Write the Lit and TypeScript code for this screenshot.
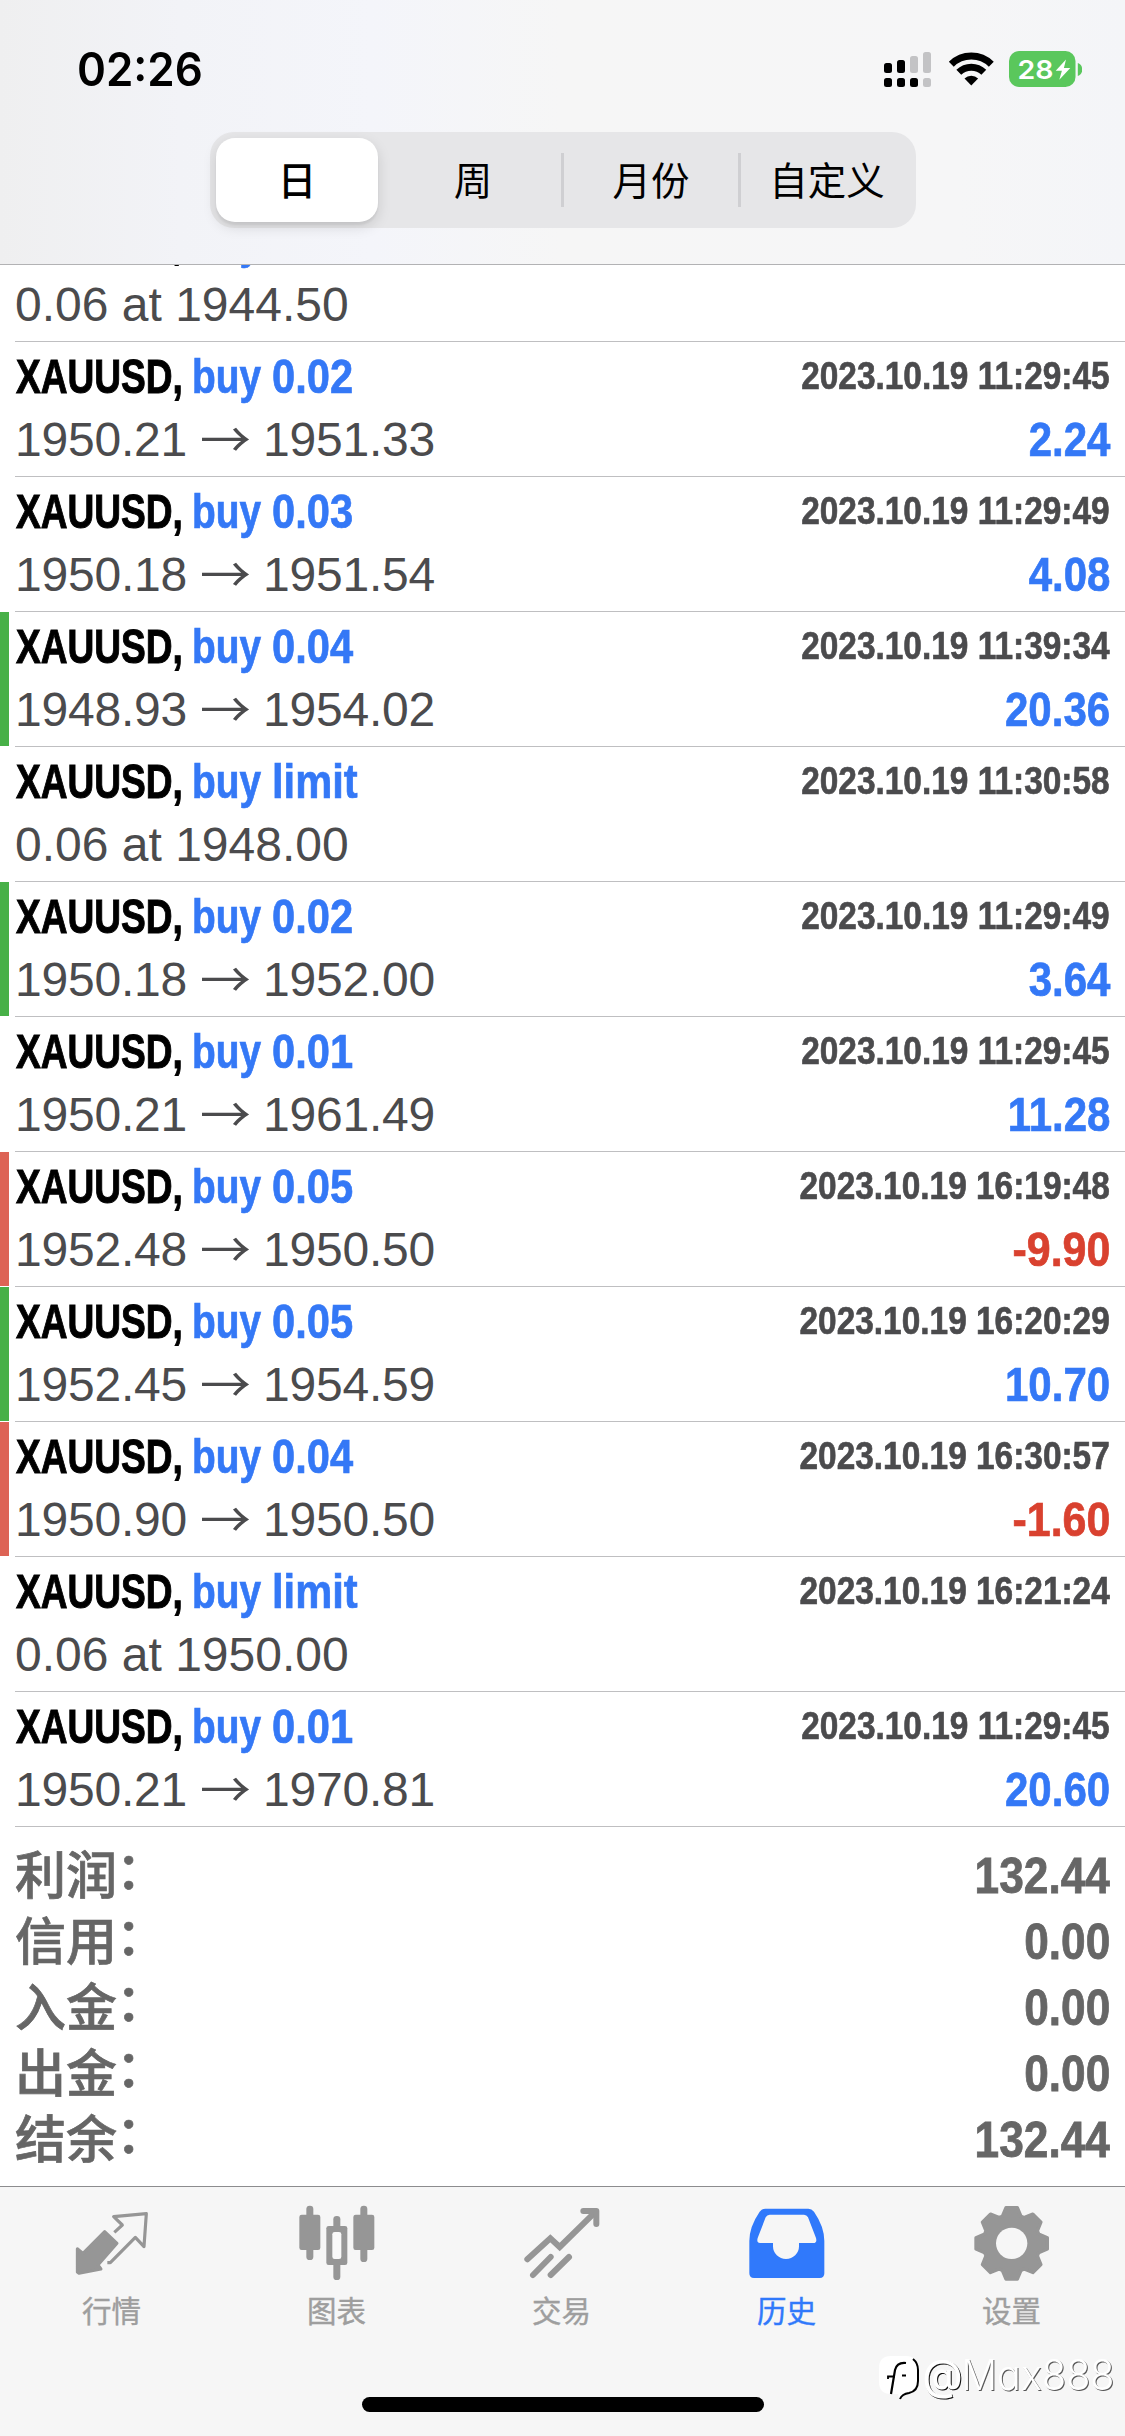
import { LitElement, html, svg, css, nothing } from "lit";
import { customElement, property } from "lit/decorators.js";
import { classMap } from "lit/directives/class-map.js";

interface Deal {
  side: string;
  size: string;
  time: string;
  from: string;
  to?: string;
  value?: string;
  mark?: "tp" | "sl";
}

const DEALS: Deal[] = [
  { side: "buy", size: "limit", time: "", from: "0.06 at 1944.50" },
  { side: "buy", size: "0.02", time: "2023.10.19 11:29:45", from: "1950.21", to: "1951.33", value: "2.24" },
  { side: "buy", size: "0.03", time: "2023.10.19 11:29:49", from: "1950.18", to: "1951.54", value: "4.08" },
  { side: "buy", size: "0.04", time: "2023.10.19 11:39:34", from: "1948.93", to: "1954.02", value: "20.36", mark: "tp" },
  { side: "buy", size: "limit", time: "2023.10.19 11:30:58", from: "0.06 at 1948.00" },
  { side: "buy", size: "0.02", time: "2023.10.19 11:29:49", from: "1950.18", to: "1952.00", value: "3.64", mark: "tp" },
  { side: "buy", size: "0.01", time: "2023.10.19 11:29:45", from: "1950.21", to: "1961.49", value: "11.28" },
  { side: "buy", size: "0.05", time: "2023.10.19 16:19:48", from: "1952.48", to: "1950.50", value: "-9.90", mark: "sl" },
  { side: "buy", size: "0.05", time: "2023.10.19 16:20:29", from: "1952.45", to: "1954.59", value: "10.70", mark: "tp" },
  { side: "buy", size: "0.04", time: "2023.10.19 16:30:57", from: "1950.90", to: "1950.50", value: "-1.60", mark: "sl" },
  { side: "buy", size: "limit", time: "2023.10.19 16:21:24", from: "0.06 at 1950.00" },
  { side: "buy", size: "0.01", time: "2023.10.19 11:29:45", from: "1950.21", to: "1970.81", value: "20.60" },
];

const TOTALS: [string, string][] = [
  ["利润", "132.44"],
  ["信用", "0.00"],
  ["入金", "0.00"],
  ["出金", "0.00"],
  ["结余", "132.44"],
];

@customElement("status-bar")
class StatusBar extends LitElement {
  static styles = css`
    :host { display: flex; justify-content: space-between; height: 132px; padding: 0 43px 0 77px; box-sizing: border-box; }
    .time { font: 600 46px/60px Inter, sans-serif; padding-top: 39px; transform: scaleX(.955); transform-origin: 0 50%; }
    .icons { display: flex; align-items: flex-start; padding-top: 47px; }
    text { font: 600 26px Inter, sans-serif; }
  `;
  render() {
    const bars = [[63, 10], [60, 13], [56, 17], [52, 21]];
    return html`
      <div class="time">02:26</div>
      <div class="icons">
        <svg width="202" height="44" viewBox="880 47 202 44">
          ${bars.map(([y, h], i) => svg`
            <rect x=${884 + i * 13} y=${y} width="8" height=${h} rx="2.5" fill=${i < 2 ? "#000" : "#c3c3c5"}></rect>
            <rect x=${884 + i * 13} y="78" width="8" height="9" rx="2.5" fill=${i < 3 ? "#000" : "#c3c3c5"}></rect>`)}
          <g fill="none" stroke="#000" stroke-width="7">
            <path d="M951.3 64.2a28.5 28.5 0 0 1 40 0"></path>
            <path d="M958.8 72.300a18 18 0 0 1 25 0"></path>
          </g>
          <path d="M971.3 85.5l-6.8-7a9.8 9.8 0 0 1 13.6 0z"></path>
          <rect x="1009" y="51" width="66.500" height="36" rx="10" fill="#5ac75c"></rect>
          <path d="M1077.800 63q4.400 1.500 4.400 6.500t-4.400 6.500z" fill="#5ac75c"></path>
          <text x="1017.500" y="79" fill="#fff" textLength="36" lengthAdjust="spacingAndGlyphs">28</text>
          <path d="M1066 59.500l-10.300 11.300h6.200l-2.600 9 11-11.800h-6.400z" fill="#fff"></path>
        </svg>
      </div>`;
  }
}

@customElement("period-switch")
class PeriodSwitch extends LitElement {
  static styles = css`
    :host { display: grid; grid-template-columns: 168px 186px 177px 175px; width: 706px; height: 96px; margin: 0 0 0 210px; border-radius: 24px; background: #e6e6e8; box-sizing: border-box; }
    .item { display: flex; align-items: center; justify-content: center; font: 400 38.500px/60px "Noto Sans CJK SC", sans-serif; color: #000; padding: 0 3px 5px 0; background: linear-gradient(#cfcfd2, #cfcfd2) no-repeat right center / 0 54px; }
    .item.rule { background-size: 3px 54px; }
    .item.rule:nth-child(2) { padding: 0 0 5px 4px; }
    .item.on { margin: 6px 0 6px 6px; padding-right: 0; border-radius: 19px; background: #fff; font-weight: 500; box-shadow: 0 5px 14px rgba(0, 0, 0, .13), 0 3px 2px rgba(0, 0, 0, .05); }
  `;
  render() {
    return ["日", "周", "月份", "自定义"].map((t, i) =>
      html`<div class=${classMap({ item: true, on: i === 0, rule: i === 1 || i === 2 })}>${t}</div>`);
  }
}

@customElement("deal-row")
class DealRow extends LitElement {
  @property({ attribute: false }) deal!: Deal;
  static styles = css`
    :host { display: flex; height: 135px; font: 400 48px/60px "Liberation Sans", Arial, sans-serif; color: #4b4b4d; white-space: nowrap; }
    .mark { width: 9px; height: 134px; }
    .mark.tp { background: #47b047; }
    .mark.sl { background: #dd6355; }
    .body { flex: 1; margin-left: 6px; padding: 5px 15px 0 0; border-bottom: 1px solid #bfbfc1; box-sizing: border-box; }
    .line { display: flex; height: 60px; }
    .line + .line { margin-top: 3px; }
    .line > span { display: block; flex: none; transform-origin: 0 50%; }
    b { display: block; flex: none; transform-origin: 0 50%; -webkit-text-stroke: .7px currentColor; }
    .symbol { width: 176px; margin-left: .5px; color: #000; transform: scaleX(.772); -webkit-text-stroke: 1px #000; }
    .side { width: 80px; color: #3478f6; transform: scaleX(.81); }
    .size { color: #3478f6; transform: scaleX(.868); }
    .line > .right { margin-left: auto; transform-origin: 100% 50%; }
    .time { font-size: 39.500px; line-height: 57px; transform: scaleX(.846); }
    .value { color: #3478f6; transform: scaleX(.875); }
    .value.neg { color: #d9412f; transform: scaleX(.895); }
    .price { width: 172px; letter-spacing: -.2px; }
    .line > .arrow { width: 63px; margin-left: 13px; font: 400 48px/52px "Noto Sans CJK SC", sans-serif; transform: scaleX(1.06); }
  `;
  render() {
    const d = this.deal;
    return html`
      <div class=${classMap({ mark: true, tp: d.mark === "tp", sl: d.mark === "sl" })}></div>
      <div class="body">
        <div class="line">
          <b class="symbol">XAUUSD,</b><b class="side">${d.side}</b><b class="size">${d.size}</b>
          <b class="right time">${d.time}</b>
        </div>
        <div class="line">
          ${d.to
            ? html`<span class="price">${d.from}</span><span class="arrow">→</span><span class="price">${d.to}</span>`
            : html`<span>${d.from}</span>`}
          ${d.value ? html`<b class=${classMap({ right: true, value: true, neg: d.value.startsWith("-") })}>${d.value}</b>` : nothing}
        </div>
      </div>`;
  }
}

@customElement("totals-list")
class TotalsList extends LitElement {
  static styles = css`
    :host { display: block; padding: 12px 15px 0 15px; color: #666; }
    .row { display: flex; justify-content: space-between; height: 66px; }
    .label { display: flex; font: 500 51px/66px "Noto Sans CJK SC", sans-serif; -webkit-text-stroke: .7px currentColor; }
    .colon { margin-left: -1px; line-height: 56px; }
    .sum { padding-top: 4px; font: 700 50px/66px "Liberation Sans", Arial, sans-serif; transform: scaleX(.885); transform-origin: 100% 50%; -webkit-text-stroke: .8px currentColor; }
  `;
  render() {
    return TOTALS.map(([k, v]) => html`
      <div class="row"><span class="label" lang="zh-CN">${k}<span class="colon">：</span></span><span class="sum">${v}</span></div>`);
  }
}

function gearOutline(cx: number, cy: number): string {
  const tooth = [[-28, -81], [-17, -107], [17, -107], [28, -81]];
  const pts: string[] = [];
  for (let i = 0; i < 8; i++) {
    const a = (i * Math.PI) / 4;
    for (const [x, y] of tooth) {
      pts.push(`${(cx + x * Math.cos(a) - y * Math.sin(a)).toFixed(1)} ${(cy + x * Math.sin(a) + y * Math.cos(a)).toFixed(1)}`);
    }
  }
  return `M${pts.join("L")}Z`;
}

const ICONS = {
  quotes: svg`
    <path d="M312 185L349 220L292 285L301 297L235 310L230 306V236L247 250Z" fill="currentColor" stroke="currentColor" stroke-width="9" stroke-linejoin="round"></path>
    <path d="M341 187L365 165L339 140L437 131L430 230L404 202L329 278H320" fill="none" stroke="currentColor" stroke-width="9.500" stroke-linejoin="round"></path>`,
  charts: svg`
    <g fill="currentColor">
      <rect x="897" y="134" width="63" height="106" rx="7"></rect><rect x="918" y="107" width="21" height="163" rx="10"></rect>
      <rect x="1059" y="134" width="63" height="106" rx="7"></rect><rect x="1080" y="107" width="21" height="169" rx="10"></rect>
      <rect x="978" y="168" width="63" height="117" rx="7"></rect><rect x="999" y="138" width="21" height="192" rx="10"></rect>
    </g>
    <rect x="996" y="186" width="27" height="81" rx="7" fill="#f9f9f9"></rect>`,
  trade: svg`
    <g fill="none" stroke="currentColor" stroke-width="18" stroke-linecap="round" stroke-linejoin="miter">
      <path d="M381 268l69-63 28 26 108-106"></path><path d="M549 123h39v39" stroke-linejoin="round"></path>
      <path d="M398 315l53-54M451 315l55-54" ></path>
    </g>`,
  history: svg`
    <path fill="currentColor" fill-rule="evenodd" d="M1095 116h129q10 0 17 9q31 45 31 88v97q0 14-14 14h-197q-14 0-14-14v-97q0-43 31-88q7-9 17-9zM1108 134q-8 0-12 8l-24 62q-4 15 7 15h39v10a39 38 0 0 0 78 0v-10h43q12 0 8-15l-24-62q-4-8-12-8z"></path>`,
  settings: svg`
    <path d=${gearOutline(574, 220)} fill="currentColor" stroke="currentColor" stroke-width="10" stroke-linejoin="round"></path>
    <circle cx="574" cy="220" r="47" fill="#f6f6f6"></circle>`,
};

const TABS = [
  { label: "行情", x: 214, icon: ICONS.quotes },
  { label: "图表", x: 890, icon: ICONS.charts },
  { label: "交易", x: 365, icon: ICONS.trade },
  { label: "历史", x: 1040, icon: ICONS.history, on: true },
  { label: "设置", x: 455, icon: ICONS.settings },
];

@customElement("tab-bar")
class TabBar extends LitElement {
  static styles = css`
    :host { display: block; position: relative; height: 250px; border-top: 1px solid #8c8c8e; background: #f6f6f6; box-sizing: border-box; }
    .tabs { display: grid; grid-template-columns: repeat(5, 225px); margin-left: -1px; height: 210px; }
    .tab { display: flex; flex-direction: column; align-items: center; padding-top: 16px; color: #969696; font: 400 29.500px/40px "Noto Sans CJK SC", sans-serif; }
    .tab.on { color: #3079fb; }
    .tab span { margin-top: 6px; color: #9e9e9e; -webkit-text-stroke: .4px currentColor; }
    .tab.on span { color: #3079fb; }
    .home { width: 402px; height: 15px; margin: 0 auto; border-radius: 8px; background: #000; }
    .sign { position: absolute; left: 876px; top: 163px; display: flex; }
    .sign text { font: 300 42px Inter, sans-serif; font-feature-settings: "cv11"; filter: drop-shadow(1px 1px 0 #555); }
    .sign .at { font-weight: 500; filter: drop-shadow(1.2px 1.2px 0 #111); }
  `;
  render() {
    return html`
      <div class="tabs">
        ${TABS.map((t) => html`
          <div class=${classMap({ tab: true, on: !!t.on })}>
            <svg width="80" height="80" viewBox="${t.x} 99 240 240">${t.icon}</svg>
            <span lang="zh-CN">${t.label}</span>
          </div>`)}
      </div>
      <div class="home"></div>
      <div class="sign">
        <svg width="245" height="56" viewBox="876 2350 245 56">
          <path d="M891 2356h15q11 0 11 13v13q0 10-9 12-7 1-9 5l-1-5h-7q-12 0-12-12v-14q0-12 12-12z" fill="#fff"></path>
          <path d="M913 2359q5 4 5 11v11q0 10-9 12-7 1-9 6" fill="none" stroke="#000" stroke-width="2"></path>
          <path d="M906 2363q-9-1-11 7l-4 24" fill="none" stroke="#000" stroke-width="2.200"></path>
          <path d="M888 2379v-2.500h7M902 2375.500h4" fill="none" stroke="#000" stroke-width="1.800"></path>
          <text class="at" x="922.500" y="2390" fill="#fff" textLength="40" lengthAdjust="spacingAndGlyphs">@</text>
          <text x="961.500" y="2390" fill="#fff" textLength="153" lengthAdjust="spacingAndGlyphs">Max888</text>
        </svg>
      </div>`;
  }
}

@customElement("app-root")
class AppRoot extends LitElement {
  static styles = css`
    :host { display: flex; flex-direction: column; width: 1125px; height: 2436px; overflow: hidden; background: #fff; font-family: "Liberation Sans", Arial, sans-serif; }
    .head { flex: none; height: 265px; border-bottom: 1px solid #b2b2b4; box-sizing: border-box; background: linear-gradient(90deg, #efeff0, #f2f3f7 16%, #f4f5fa 33%, #f6f6f6 50%, #f6f6f7 85%, #f4f5f8); }
    .list { flex: 1; min-height: 0; overflow: hidden; }
    .list deal-row:first-child { margin-top: -58px; }
    tab-bar { flex: none; }
  `;
  render() {
    return html`
      <div class="head"><status-bar></status-bar><period-switch></period-switch></div>
      <div class="list">
        ${DEALS.map((d) => html`<deal-row .deal=${d}></deal-row>`)}
        <totals-list></totals-list>
      </div>
      <tab-bar></tab-bar>`;
  }
}
